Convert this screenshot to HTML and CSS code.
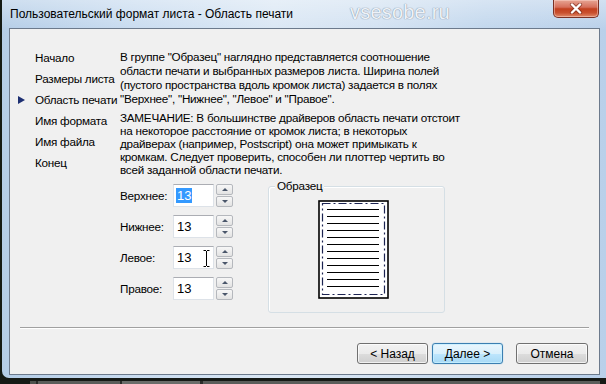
FILE: index.html
```html
<!DOCTYPE html>
<html lang="ru">
<head>
<meta charset="utf-8">
<title>Пользовательский формат листа - Область печати</title>
<link rel="stylesheet" href="styles.css">
</head>
<body>
<div class="screen">
  <div class="window">
    <div class="titlebar">
      <span class="title">Пользовательский формат листа - Область печати</span>
      <span class="watermark">vsesobe.ru</span>
      <div class="close">
        <svg width="14" height="11" viewBox="0 0 14 11">
          <path d="M3 1.5 L11 9.5 M11 1.5 L3 9.5" stroke="#6a2418" stroke-width="4.2" stroke-linecap="round" opacity="0.55"/>
          <path d="M3 1.5 L11 9.5 M11 1.5 L3 9.5" stroke="#ffffff" stroke-width="2.4" stroke-linecap="round"/>
        </svg>
      </div>
    </div>
    <div class="client">
      <div class="main">
        <ul class="nav">
          <li>Начало</li>
          <li>Размеры листа</li>
          <li class="active">Область печати</li>
          <li>Имя формата</li>
          <li>Имя файла</li>
          <li>Конец</li>
        </ul>
        <div class="content">
          <p class="p1">В группе "Образец" наглядно представляется соотношение<br>области печати и выбранных размеров листа. Ширина полей<br>(пустого пространства вдоль кромок листа) задается в полях<br>"Верхнее", "Нижнее", "Левое" и "Правое".</p>
          <p class="p2">ЗАМЕЧАНИЕ: В большинстве драйверов область печати отстоит<br>на некоторое расстояние от кромок листа; в некоторых<br>драйверах (например, Postscript) она может примыкать к<br>кромкам. Следует проверить, способен ли плоттер чертить во<br>всей заданной области печати.</p>
          <div class="lower">
            <div class="fields">
              <div class="field">
                <span class="lbl">Верхнее:</span>
                <div class="input"><span class="sel">13</span></div>
                <div class="spin"><span class="sb up"></span><span class="sb down"></span></div>
              </div>
              <div class="field">
                <span class="lbl">Нижнее:</span>
                <div class="input">13</div>
                <div class="spin"><span class="sb up"></span><span class="sb down"></span></div>
              </div>
              <div class="field">
                <span class="lbl">Левое:</span>
                <div class="input">13</div>
                <div class="spin"><span class="sb up"></span><span class="sb down"></span></div>
                <svg class="ibeam" width="7" height="17" viewBox="0 0 7 17">
                  <path d="M0.5 0.5h2.5M4 0.5h2.5M3.5 1v15M0.5 16.5h2.5M4 16.5h2.5" stroke="#000" stroke-width="1" fill="none"/>
                </svg>
              </div>
              <div class="field">
                <span class="lbl">Правое:</span>
                <div class="input">13</div>
                <div class="spin"><span class="sb up"></span><span class="sb down"></span></div>
              </div>
            </div>
            <div class="group">
              <div class="group-title">Образец</div>
              <svg class="preview" width="71" height="99" viewBox="0 0 71 99">
                <rect x="1" y="1" width="69" height="97" fill="#fff" stroke="#000" stroke-width="1.6"/>
                <rect x="4.5" y="3.5" width="62" height="91" fill="none" stroke="#1c2452" stroke-width="1.2" stroke-dasharray="8 3 2 3"/>
                <g stroke="#000" stroke-width="1">
                  <path d="M9 9.5H61M9 16.5H61M9 23.5H61M9 30.5H61M9 37.5H61M9 44.5H61M9 51.5H61M9 58.5H61M9 65.5H61M9 72.5H61M9 79.5H61M9 86.5H61"/>
                </g>
              </svg>
            </div>
          </div>
        </div>
      </div>
      <div class="sep"></div>
      <div class="buttons">
        <div class="btn back">&lt; Назад</div>
        <div class="btn next">Далее &gt;</div>
        <div class="btn cancel">Отмена</div>
      </div>
    </div>
  </div>
  <div class="strip"></div>
</div>
</body>
</html>
```
FILE: styles.css
```css
* { box-sizing: border-box; }
html, body { margin: 0; padding: 0; }
body {
  width: 606px;
  height: 384px;
  overflow: hidden;
  background: #141a14;
  font-family: "Liberation Sans", Arial, sans-serif;
  font-size: 12px;
  color: #000;
}
.screen { width: 606px; height: 384px; display: flex; flex-direction: column; }

.window {
  margin-left: 2px;
  width: 604px;
  height: 378px;
  padding-bottom: 3px;
  display: flex;
  flex-direction: column;
  border-radius: 0 0 0 7px;
  background:
    linear-gradient(180deg, rgba(255,255,255,0.35) 0, rgba(255,255,255,0) 30px),
    linear-gradient(90deg, #b4cde7 0%, #c9dcf0 22%, #dae7f4 45%, #d3e2f2 62%, #c2d7ed 80%, #b9d0ea 100%);
}

.titlebar {
  height: 28px;
  flex: none;
  display: flex;
  align-items: flex-start;
  padding-left: 8px;
}
.title {
  width: 340px;
  flex: none;
  line-height: 28px;
  font-size: 12px;
  white-space: nowrap;
  color: #000;
}
.watermark {
  font-family: "Liberation Sans", Arial, sans-serif;
  font-size: 20px;
  line-height: 25px;
  letter-spacing: 0.2px;
  color: #eef2f7;
  text-shadow: 0 0 1px #8797aa, 0 0 1px #8797aa;
}
.close {
  margin-left: auto;
  margin-right: 7px;
  width: 46px;
  height: 18px;
  border: 1px solid #7a3125;
  border-top: none;
  border-radius: 0 0 5px 5px;
  display: flex;
  align-items: center;
  justify-content: center;
  background: linear-gradient(180deg, #e7a594 0%, #d6705c 42%, #c2401f 52%, #c9502e 75%, #e08a6a 100%);
  box-shadow: inset 0 0 0 1px rgba(255,220,210,0.45);
}
.close svg { display: block; }

.client {
  margin: 0 6px 0 7px;
  height: 347px;
  border: 1px solid #6c7a8c;
  background: #f0f0f0;
  display: flex;
  flex-direction: column;
  font-size: 11.7px;
  letter-spacing: -0.25px;
}

.main {
  flex: 1;
  display: flex;
  padding-top: 18px;
}

.nav {
  list-style: none;
  margin: 0;
  padding: 0 0 0 8px;
  width: 110px;
  flex: none;
}
.nav li {
  height: 21px;
  line-height: 21px;
  display: flex;
  align-items: center;
  white-space: nowrap;
}
.nav li::before {
  content: "";
  width: 0;
  height: 0;
  border-top: 4px solid transparent;
  border-bottom: 4px solid transparent;
  border-left: 7px solid transparent;
  margin-right: 10px;
  flex: none;
}
.nav li.active::before { border-left-color: #1d2f72; }

.content { flex: 1; }
.content p { margin: 0; white-space: nowrap; }
.p1 { margin-top: 3px !important; line-height: 14px; }
.p2 { margin-top: 5px !important; line-height: 13px; }

.lower { display: flex; margin-top: 8px; align-items: flex-start; }

.fields { display: flex; flex-direction: column; gap: 8px; }
.field {
  position: relative;
  height: 23px;
  display: flex;
  align-items: center;
}
.lbl { width: 53px; flex: none; }
.input {
  width: 41px;
  height: 23px;
  margin-right: 2px;
  padding-left: 3px;
  background: #fff;
  border: 1px solid #dde2e8;
  border-top-color: #abadb3;
  display: flex;
  align-items: center;
  font-size: 13px;
  letter-spacing: 0;
}
.sel { background: #3399ff; color: #fff; line-height: 15px; padding: 0 1px; margin-left: -1px; }
.spin {
  width: 17px;
  height: 23px;
  display: flex;
  flex-direction: column;
  gap: 1px;
}
.sb {
  flex: 1;
  border: 1px solid #b5b8bd;
  border-radius: 2px;
  background: linear-gradient(180deg, #f7f7f7, #e3e3e3);
  display: flex;
  align-items: center;
  justify-content: center;
}
.sb::after {
  content: "";
  width: 0;
  height: 0;
  border-left: 3px solid transparent;
  border-right: 3px solid transparent;
}
.up::after { border-bottom: 3px solid #4a566a; }
.down::after { border-top: 3px solid #4a566a; }
.ibeam { position: absolute; left: 83px; top: 4px; }

.group {
  margin-left: 35px;
  margin-top: 2px;
  width: 177px;
  height: 127px;
  border: 1px solid #d5dfe5;
  border-radius: 3px;
  box-shadow: inset 1px 1px 0 #fff;
}
.group-title {
  display: block;
  width: fit-content;
  margin: -8px 0 0 6px;
  padding: 0 2px;
  line-height: 14px;
  background: #f0f0f0;
}
.preview { display: block; margin: 7px 0 0 49px; }

.sep {
  flex: none;
  height: 2px;
  margin: 0 10px 14px;
  border-top: 1px solid #a0a0a0;
  border-bottom: 1px solid #ffffff;
}

.buttons {
  flex: none;
  display: flex;
  justify-content: flex-end;
  padding: 0 11px 10px 0;
}
.btn {
  height: 21px;
  width: 71px;
  border: 1px solid #707070;
  border-radius: 3px;
  display: flex;
  align-items: center;
  justify-content: center;
  background: linear-gradient(180deg, #f2f2f2 0%, #ebebeb 50%, #dddddd 51%, #cfcfcf 100%);
  box-shadow: inset 0 0 0 1px rgba(255,255,255,0.7);
  font-size: 12px;
  letter-spacing: 0;
}
.next {
  margin-left: 4px;
  border-color: #3c7fb1;
  background: linear-gradient(180deg, #eaf6fd 0%, #d9f0fc 50%, #bee6fd 51%, #a7d9f5 100%);
  box-shadow: inset 0 0 0 1px rgba(200,240,255,0.8), 0 0 1px #5fb0e0;
}
.cancel { margin-left: 13px; width: 72px; }

.strip {
  flex: none;
  height: 6px;
  background:
    linear-gradient(90deg, transparent 0 30px, #4e524e 30px 36px, #2a2d2a 36px 38px, #5a5d5a 38px 120px, #2a2d2a 120px 122px, #6a6d6a 122px 200px, #2a2d2a 200px 203px, #5a5d5a 203px 600px, transparent 600px) 0 3px / 100% 3px no-repeat,
    #161a16;
}
```
